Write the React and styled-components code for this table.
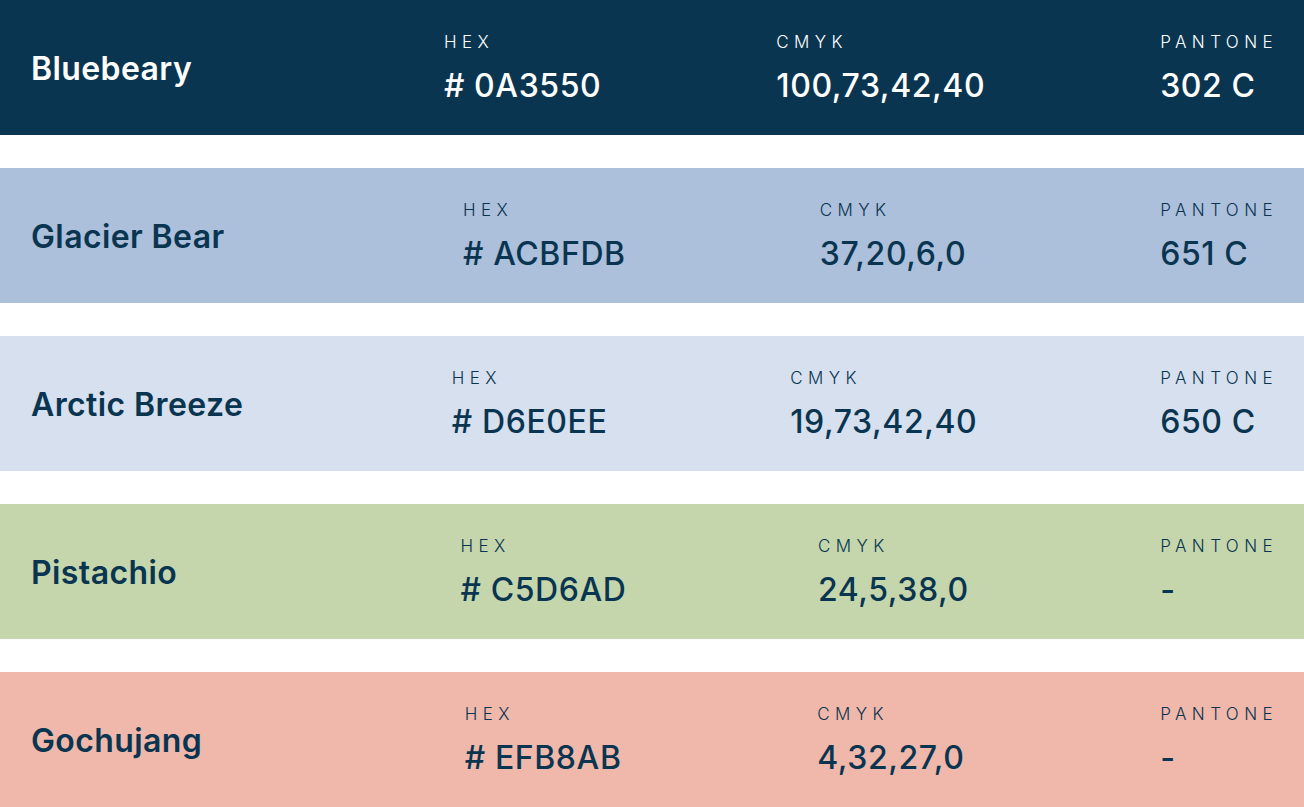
import React from 'react';
import styled, { createGlobalStyle } from 'styled-components';

const GlobalStyle = createGlobalStyle`
  html, body {
    margin: 0;
    padding: 0;
    background: #ffffff;
  }
  body {
    font-family: Inter, "Open Sans", sans-serif;
  }
`;

const swatches = [
  { name: 'Bluebeary', hex: '0A3550', cmyk: '100,73,42,40', pantone: '302 C', bg: '#0a3550', fg: '#ffffff' },
  { name: 'Glacier Bear', hex: 'ACBFDB', cmyk: '37,20,6,0', pantone: '651 C', bg: '#acbfdb', fg: '#0a3550' },
  { name: 'Arctic Breeze', hex: 'D6E0EE', cmyk: '19,73,42,40', pantone: '650 C', bg: '#d6e0ee', fg: '#0a3550' },
  { name: 'Pistachio', hex: 'C5D6AD', cmyk: '24,5,38,0', pantone: '-', bg: '#c5d6ad', fg: '#0a3550' },
  { name: 'Gochujang', hex: 'EFB8AB', cmyk: '4,32,27,0', pantone: '-', bg: '#efb8ab', fg: '#0a3550' },
];

const Palette = styled.div`
  display: flex;
  flex-direction: column;
  gap: 33px;
  width: 100%;
`;

const Row = styled.div`
  height: 135px;
  background: ${(p) => p.$bg};
  color: ${(p) => p.$fg};
  display: flex;
  align-items: center;
  justify-content: space-between;
  padding: 0 26px 0 31px;
  box-sizing: border-box;
`;

const Name = styled.div`
  width: 238px;
  font-size: 32px;
  font-weight: 600;
  letter-spacing: 0.4px;
  margin-top: 2px;
`;

const Spec = styled.div`
  display: flex;
  flex-direction: column;
  gap: 17px;
  margin-top: 2px;
`;

const Label = styled.div`
  font-size: 17px;
  font-weight: 300;
  letter-spacing: 5.4px;
  line-height: 18px;
`;

const Value = styled.div`
  font-size: 32px;
  font-weight: 500;
  letter-spacing: 0.6px;
  line-height: 36px;
`;

export default function App() {
  return (
    <>
      <GlobalStyle />
      <Palette>
        {swatches.map((s) => (
          <Row key={s.name} $bg={s.bg} $fg={s.fg}>
            <Name>{s.name}</Name>
            <Spec>
              <Label>HEX</Label>
              <Value># {s.hex}</Value>
            </Spec>
            <Spec>
              <Label>CMYK</Label>
              <Value>{s.cmyk}</Value>
            </Spec>
            <Spec>
              <Label>PANTONE</Label>
              <Value>{s.pantone}</Value>
            </Spec>
          </Row>
        ))}
      </Palette>
    </>
  );
}
